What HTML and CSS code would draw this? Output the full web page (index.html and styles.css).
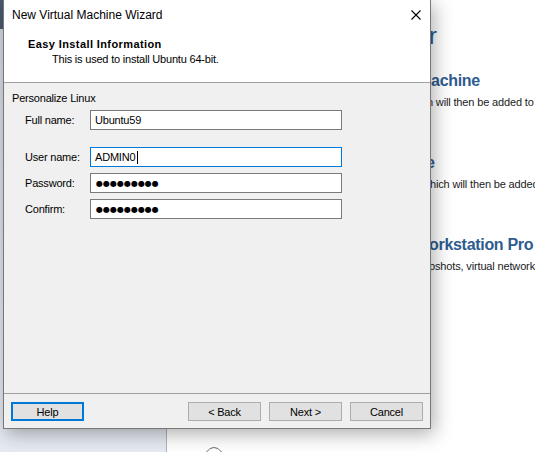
FILE: index.html
```html
<!DOCTYPE html>
<html>
<head>
<meta charset="utf-8">
<link rel="stylesheet" href="styles.css">
</head>
<body>
<div class="app">
  <aside class="sidebar"><div class="sidebar-top"></div></aside>
  <main class="home">
    <div class="home-text">
      <div class="welcome">r</div>
      <div class="entry">
        <div class="entry-title cut-m">Machine</div>
        <div class="entry-desc cut-n">n will then be added to</div>
      </div>
      <div class="entry">
        <div class="entry-title cut-e">e</div>
        <div class="entry-desc cut-h">hich will then be added</div>
      </div>
      <div class="entry">
        <div class="entry-title cut-o">orkstation Pro</div>
        <div class="entry-desc cut-p">pshots, virtual network</div>
      </div>
    </div>
    <div class="tile-icon">
      <svg width="20" height="10" viewBox="0 0 20 10"><path d="M2.5 9.5 V6 L6 2.5 Q10 0.5 14 2.5 L17.5 6 V9.5" fill="none" stroke="#6b6b6b" stroke-width="1"/></svg>
    </div>
  </main>
</div>

<div class="dialog">
  <div class="titlebar">
    <span class="title">New Virtual Machine Wizard</span>
    <svg class="close" width="10" height="10" viewBox="0 0 10 10"><path d="M0.5 0.5 L9.5 9.5 M9.5 0.5 L0.5 9.5" stroke="#000" stroke-width="1.1" fill="none"/></svg>
  </div>
  <div class="header">
    <div class="header-title">Easy Install Information</div>
    <div class="header-sub">This is used to install Ubuntu 64-bit.</div>
  </div>
  <div class="content">
    <div class="group-title">Personalize Linux</div>
    <div class="form">
      <div class="field">
        <span class="label">Full name:</span>
        <div class="input">Ubuntu59</div>
      </div>
      <div class="field spaced">
        <span class="label">User name:</span>
        <div class="input focused">ADMIN0<span class="caret"></span></div>
      </div>
      <div class="field">
        <span class="label">Password:</span>
        <div class="input"><span class="dots">●●●●●●●●●</span></div>
      </div>
      <div class="field">
        <span class="label">Confirm:</span>
        <div class="input"><span class="dots">●●●●●●●●●</span></div>
      </div>
    </div>
  </div>
  <div class="footer">
    <div class="btn btn-default">Help</div>
    <div class="spacer"></div>
    <div class="btn">&lt; Back</div>
    <div class="btn">Next &gt;</div>
    <div class="btn">Cancel</div>
  </div>
</div>
</body>
</html>
```

FILE: styles.css
```css
html, body {
  margin: 0;
  padding: 0;
}
body {
  width: 535px;
  height: 452px;
  overflow: hidden;
  position: relative;
  background: #fff;
  font-family: "Liberation Sans", Arial, sans-serif;
  color: #000;
}

/* background application */
.app {
  display: flex;
  height: 452px;
}
.sidebar {
  flex: none;
  width: 166px;
  border-right: 1px solid #b3b3b3;
  background: linear-gradient(#d2d8df, #e6ebf2);
  display: flex;
  flex-direction: column;
}
.sidebar-top {
  height: 29px;
  background: #4a5a70;
}
.home {
  flex: 1;
  min-width: 0;
  display: flex;
  flex-direction: column;
  background: #fff;
}
.home-text {
  padding-left: 264px;
  padding-top: 22px;
  white-space: nowrap;
}
.welcome {
  font-size: 24px;
  line-height: 28px;
  color: #2e5c8e;
  margin-left: -2px;
}
.welcome + .entry {
  margin-top: 21px;
}
.entry + .entry {
  margin-top: 43px;
}
.entry-title {
  font-size: 16px;
  font-weight: bold;
  line-height: 20px;
  letter-spacing: -0.3px;
  color: #2e5c8e;
}
.entry-desc {
  font-size: 11px;
  line-height: 16px;
  margin-top: 3px;
  letter-spacing: -0.15px;
  color: #1b1b1b;
}
.cut-m { margin-left: -13px; }
.cut-n { margin-left: -4px; }
.cut-e { margin-left: -5px; }
.cut-h { margin-left: -1px; }
.cut-o { margin-left: -2px; }
.cut-p { margin-left: -2px; }
.tile-icon {
  margin-top: auto;
  height: 6px;
  padding-left: 37px;
  overflow: visible;
}
.tile-icon svg {
  display: block;
}

/* wizard dialog */
.dialog {
  position: absolute;
  left: 3px;
  top: -1px;
  width: 428px;
  height: 430px;
  box-sizing: border-box;
  border: 1px solid #777;
  background: #f0f0f0;
  display: flex;
  flex-direction: column;
  box-shadow: 3px 5px 18px rgba(0, 0, 0, 0.32);
  font-size: 11px;
  letter-spacing: -0.2px;
}
.titlebar {
  flex: none;
  height: 30px;
  background: #fff;
  display: flex;
  align-items: center;
  justify-content: space-between;
  padding: 0 9px 0 8px;
}
.title {
  font-size: 12px;
  letter-spacing: 0;
}
.close {
  display: block;
}
.header {
  flex: none;
  height: 45px;
  padding: 7px 0 0 24px;
  background: #fff;
  border-bottom: 1px solid #a0a0a0;
}
.header-title {
  font-weight: bold;
  line-height: 15px;
  letter-spacing: 0.4px;
}
.header-sub {
  line-height: 15px;
  padding-left: 24px;
}
.content {
  flex: 1;
  padding: 8px 0 0 8px;
}
.group-title {
  line-height: 15px;
}
.form {
  margin: 4px 0 0 13px;
}
.field {
  display: flex;
  align-items: center;
  height: 20px;
}
.field + .field {
  margin-top: 6px;
}
.field.spaced {
  margin-top: 17px;
}
.label {
  width: 65px;
}
.input {
  width: 252px;
  height: 20px;
  box-sizing: border-box;
  border: 1px solid #7a7a7a;
  background: #fff;
  padding-left: 4px;
  display: flex;
  align-items: center;
}
.input.focused {
  border-color: #0078d7;
}
.caret {
  display: inline-block;
  width: 1px;
  height: 13px;
  background: #000;
  margin-left: 2px;
}
.dots {
  font-family: "DejaVu Sans", sans-serif;
  font-size: 8px;
  letter-spacing: 0;
  margin-left: 1px;
}
.footer {
  flex: none;
  border-top: 1px solid #a0a0a0;
  padding: 8px 7px 7px;
  display: flex;
  gap: 8px;
}
.spacer {
  flex: 1;
}
.btn {
  width: 73px;
  height: 19px;
  box-sizing: border-box;
  border: 1px solid #adadad;
  background: #e1e1e1;
  display: flex;
  align-items: center;
  justify-content: center;
}
.btn-default {
  border: 2px solid #0078d7;
}
```
